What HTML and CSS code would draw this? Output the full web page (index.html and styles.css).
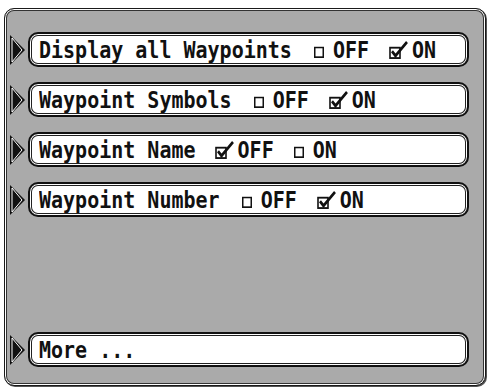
FILE: index.html
```html
<!DOCTYPE html>
<html lang="en">
<head>
  <meta charset="UTF-8">
  <title>Waypoint Options</title>
  <link rel="stylesheet" href="styles.css">
</head>
<body>
  <div class="panel">
    <div class="row">
      <svg class="arrow" width="16" height="30" viewBox="0 0 16 30"><polygon points="0,0 15,15 0,30" fill="#111"/><polygon points="2,3 12,15 2,27" fill="#111" stroke="#fff" stroke-width="1"/></svg>
      <div class="pill">
        <div class="pill-text">
          <span class="label">Display all Waypoints</span>
          <span class="opt first"><svg class="box" width="10" height="10" viewBox="0 0 10 10"><rect x="0.75" y="0.75" width="8.5" height="8.5" fill="#fff" stroke="#111" stroke-width="1.5"/></svg>OFF</span>
          <span class="opt"><svg class="check" width="20" height="17" viewBox="0 0 20 17"><rect x="1" y="7" width="10" height="9" fill="#fff" stroke="#111" stroke-width="1.6"/><path d="M3 10 L6.5 14 L18 2" fill="none" stroke="#111" stroke-width="2.6"/></svg>ON</span>
        </div>
      </div>
    </div>
    <div class="row">
      <svg class="arrow" width="16" height="30" viewBox="0 0 16 30"><polygon points="0,0 15,15 0,30" fill="#111"/><polygon points="2,3 12,15 2,27" fill="#111" stroke="#fff" stroke-width="1"/></svg>
      <div class="pill">
        <div class="pill-text">
          <span class="label">Waypoint Symbols</span>
          <span class="opt first"><svg class="box" width="10" height="10" viewBox="0 0 10 10"><rect x="0.75" y="0.75" width="8.5" height="8.5" fill="#fff" stroke="#111" stroke-width="1.5"/></svg>OFF</span>
          <span class="opt"><svg class="check" width="20" height="17" viewBox="0 0 20 17"><rect x="1" y="7" width="10" height="9" fill="#fff" stroke="#111" stroke-width="1.6"/><path d="M3 10 L6.5 14 L18 2" fill="none" stroke="#111" stroke-width="2.6"/></svg>ON</span>
        </div>
      </div>
    </div>
    <div class="row">
      <svg class="arrow" width="16" height="30" viewBox="0 0 16 30"><polygon points="0,0 15,15 0,30" fill="#111"/><polygon points="2,3 12,15 2,27" fill="#111" stroke="#fff" stroke-width="1"/></svg>
      <div class="pill">
        <div class="pill-text">
          <span class="label">Waypoint Name</span>
          <span class="opt first tight"><svg class="check" width="20" height="17" viewBox="0 0 20 17"><rect x="1" y="7" width="10" height="9" fill="#fff" stroke="#111" stroke-width="1.6"/><path d="M3 10 L6.5 14 L18 2" fill="none" stroke="#111" stroke-width="2.6"/></svg>OFF</span>
          <span class="opt"><svg class="box" width="10" height="10" viewBox="0 0 10 10"><rect x="0.75" y="0.75" width="8.5" height="8.5" fill="#fff" stroke="#111" stroke-width="1.5"/></svg>ON</span>
        </div>
      </div>
    </div>
    <div class="row">
      <svg class="arrow" width="16" height="30" viewBox="0 0 16 30"><polygon points="0,0 15,15 0,30" fill="#111"/><polygon points="2,3 12,15 2,27" fill="#111" stroke="#fff" stroke-width="1"/></svg>
      <div class="pill">
        <div class="pill-text">
          <span class="label">Waypoint Number</span>
          <span class="opt first"><svg class="box" width="10" height="10" viewBox="0 0 10 10"><rect x="0.75" y="0.75" width="8.5" height="8.5" fill="#fff" stroke="#111" stroke-width="1.5"/></svg>OFF</span>
          <span class="opt"><svg class="check" width="20" height="17" viewBox="0 0 20 17"><rect x="1" y="7" width="10" height="9" fill="#fff" stroke="#111" stroke-width="1.6"/><path d="M3 10 L6.5 14 L18 2" fill="none" stroke="#111" stroke-width="2.6"/></svg>ON</span>
        </div>
      </div>
    </div>
    <div class="row more">
      <svg class="arrow" width="16" height="30" viewBox="0 0 16 30"><polygon points="0,0 15,15 0,30" fill="#111"/><polygon points="2,3 12,15 2,27" fill="#111" stroke="#fff" stroke-width="1"/></svg>
      <div class="pill">
        <div class="pill-text">
          <span class="label">More ...</span>
        </div>
      </div>
    </div>
  </div>
</body>
</html>
```

FILE: styles.css
```css
body {
  margin: 0;
  background: #fff;
  font-family: "DejaVu Sans Mono", "Liberation Mono", monospace;
}
.panel {
  box-sizing: border-box;
  margin: 8px 3px 3px 4px;
  height: 378px;
  background: #aaaaaa;
  border: 1px solid #1a1a1a;
  border-radius: 10px;
  box-shadow: inset 0 0 0 1px #fff, inset 0 0 0 2px #333, 1px 1px 0 #555;
  padding: 23px 16px 18px 5px;
  display: flex;
  flex-direction: column;
  gap: 15px;
}
.row {
  display: flex;
  align-items: center;
  gap: 2px;
}
.row.more {
  margin-top: auto;
}
.arrow {
  flex: none;
}
.pill {
  box-sizing: border-box;
  flex: 1;
  height: 35px;
  background: #fff;
  border: 2px solid #111;
  border-radius: 10px;
  box-shadow: inset 0 0 0 1px #fff, inset 0 0 0 2px #222;
  display: flex;
  align-items: center;
  padding-left: 9px;
}
.pill-text {
  display: flex;
  align-items: flex-end;
  font-size: 20px;
  font-weight: bold;
  color: #111;
  line-height: 20px;
  transform: scaleY(1.15);
}
.label {
  white-space: pre;
}
.opt {
  display: flex;
  align-items: flex-end;
  margin-left: 20px;
}
.opt.first {
  margin-left: 22px;
}
.opt.first.tight {
  margin-left: 19px;
}
.box {
  margin: 0 9px 3px 0;
}
.check {
  margin: 0 3px 2px 0;
}
```
